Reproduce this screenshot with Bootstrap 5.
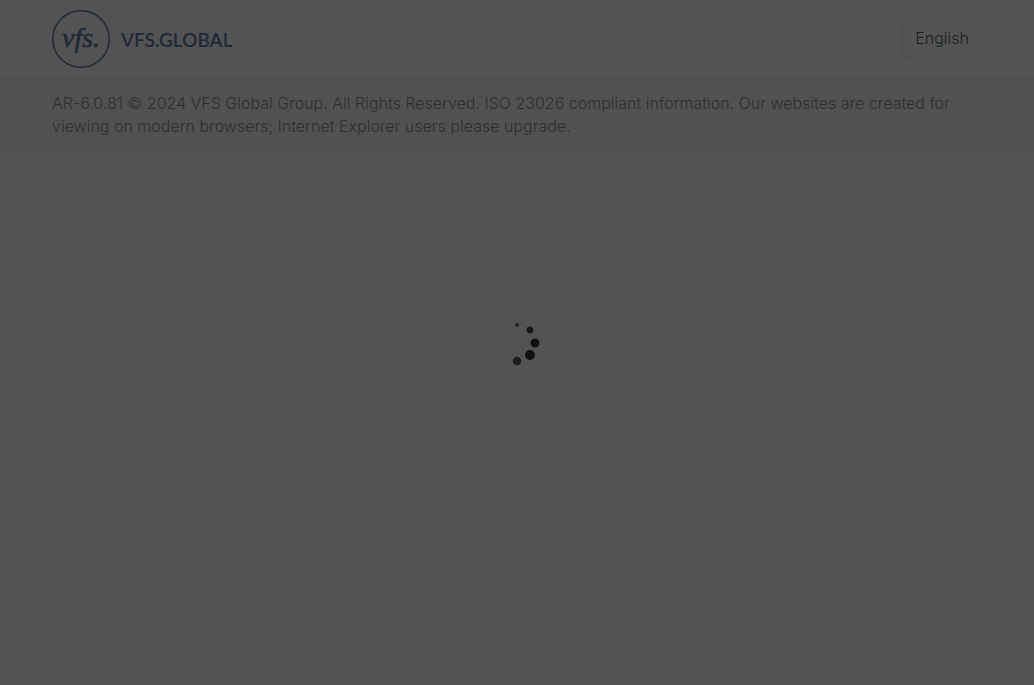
<!DOCTYPE html>
<html lang="en">
<head>
<meta charset="utf-8">
<meta name="viewport" content="width=device-width, initial-scale=1">
<title>VFS Global</title>
<link href="https://cdn.jsdelivr.net/npm/bootstrap@5.3.0/dist/css/bootstrap.min.css" rel="stylesheet">
<style>
body { background: #535353; font-family: Inter, "Liberation Sans", sans-serif; font-weight: 300; color: #2b3034; }
.page-wrap { padding: 0 52px; }
.site-header { padding: 10px 0; border-bottom: 1px solid #4f4f4f; }
.brand-link { color: #1f2935; gap: 11px; }
.brand-name { font: 600 19px/24px Lato, sans-serif; padding-top: 2px; }
.lang-btn, .lang-btn:hover { font-weight: 300; color: #1a1f23; border-color: #4d4d4d; padding: 5px 12px 7px; }
.site-footer { background: #515151; padding: 13px 0 15px; }
.legal { line-height: 23px; }
.loading { pointer-events: none; }
</style>
</head>
<body>
<header class="site-header">
  <div class="page-wrap d-flex justify-content-between align-items-center">
    <a class="brand-link d-flex align-items-center text-decoration-none" href="#">
      <svg width="58" height="58" viewBox="0 0 58 58" aria-hidden="true">
        <circle cx="29" cy="29" r="28.2" fill="none" stroke="#1f2935" stroke-width="1.5"/>
        <text x="10" y="37" fill="#1f2935" stroke="#1f2935" stroke-width=".6" font-family="Liberation Serif, serif" font-style="italic" font-size="28">vfs.</text>
      </svg>
      <span class="brand-name">VFS.GLOBAL</span>
    </a>
    <button type="button" class="btn lang-btn">English</button>
  </div>
</header>
<footer class="site-footer">
  <div class="page-wrap">
    <p class="legal mb-0">AR-6.0.81 © 2024 VFS Global Group. All Rights Reserved. ISO 23026 compliant information. Our websites are created for viewing on modern browsers; Internet Explorer users please upgrade.</p>
  </div>
</footer>
<div class="loading position-fixed top-0 start-0 w-100 h-100 d-flex justify-content-center align-items-center" role="status" aria-label="Loading">
  <svg width="60" height="60" viewBox="0 0 60 60" fill="#111">
    <circle cx="17" cy="17" r="1" fill="#3b3b3b"/>
    <circle cx="30" cy="12" r="2.1" fill="#262626"/>
    <circle cx="43" cy="17" r="3.4" fill="#191919"/>
    <circle cx="48" cy="30" r="4.5"/>
    <circle cx="43" cy="42" r="5"/>
    <circle cx="30" cy="48" r="4.3" fill="#1d1d1d"/>
  </svg>
</div>
<script src="https://cdn.jsdelivr.net/npm/bootstrap@5.3.0/dist/js/bootstrap.bundle.min.js"></script>
</body>
</html>
